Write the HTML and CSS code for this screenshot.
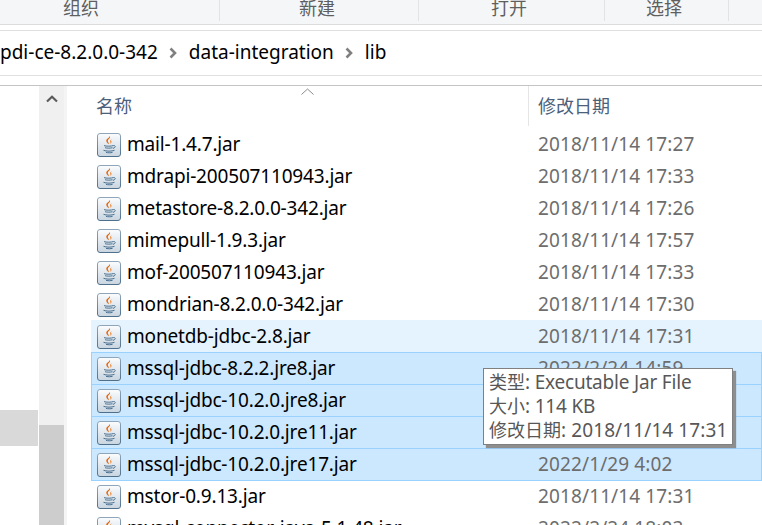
FILE: index.html
```html
<!DOCTYPE html>
<html lang="zh">
<head>
<meta charset="utf-8">
<title>lib</title>
<link rel="stylesheet" href="styles.css">
</head>
<body>
<svg class="defs" width="0" height="0" aria-hidden="true">
  <defs>
    <linearGradient id="jarbg" x1="0" y1="0" x2="0" y2="1">
      <stop offset="0" stop-color="#fbfcfd"/>
      <stop offset="1" stop-color="#c9d5e0"/>
    </linearGradient>
    <linearGradient id="jarline" x1="0" y1="0" x2="0" y2="1">
      <stop offset="0" stop-color="#8fa6ba"/>
      <stop offset="1" stop-color="#4f708c"/>
    </linearGradient>
    <symbol id="jar" viewBox="0 0 24 24">
      <rect x="0.5" y="0.5" width="23" height="23" rx="2.5" fill="url(#jarbg)" stroke="url(#jarline)"/>
      <path d="M12.800 3c1.500 2.200-3 3.400-1.800 5.800.4.900 1 1.500.9 2.400-1.900-1.200-3.400-2.800-2.300-4.700.8-1.200 2.900-1.800 3.200-3.500z" fill="#e2640f"/>
      <path d="M15 6.200c-1.700.8-2.300 1.700-1.700 3 .2.500.4 1 .1 1.700 1.500-1 1.300-2.100.8-2.800-.5-.7-.2-1.200.8-1.900z" fill="#ee8a35"/>
      <path d="M7 12.600c2 .8 7.500.8 9.500-.1M8 14.700c1.800.6 5.800.6 7.500 0M16.500 12.600c2.200-.4 2.600 1.900-.6 2.800M6.500 17.300c2.500 1.100 8.500 1.100 11 0M9 19.400c2 .5 4.500.5 6.500 0" fill="none" stroke="#4a7090" stroke-width="1"/>
    </symbol>
  </defs>
</svg>
<div class="window">
  <nav class="toolbar">
    <div class="tool tool-a"><span>组织</span></div>
    <div class="tool tool-b"><span>新建</span></div>
    <div class="tool tool-c"><span>打开</span></div>
    <div class="tool tool-d"><span>选择</span></div>
    <div class="tool tool-e"></div>
  </nav>
  <div class="address">
    <span class="crumb">pdi-ce-8.2.0.0-342</span>
    <svg class="sep" viewBox="0 0 8 12"><path d="M1.500 1.500 6 6l-4.500 4.500" fill="none" stroke="#808080" stroke-width="2.600"/></svg>
    <span class="crumb">data-integration</span>
    <svg class="sep" viewBox="0 0 8 12"><path d="M1.500 1.500 6 6l-4.500 4.500" fill="none" stroke="#808080" stroke-width="2.600"/></svg>
    <span class="crumb">lib</span>
  </div>
  <div class="content">
    <aside class="nav">
      <div class="nav-pane"><div class="nav-selected"></div></div>
      <div class="scrollbar">
        <svg class="scroll-up" viewBox="0 0 12 8"><path d="M1 6.500 6 1.800l5 4.700" fill="none" stroke="#5a5a5a" stroke-width="2.200"/></svg>
        <div class="scroll-thumb"></div>
      </div>
      <div class="gutter"></div>
    </aside>
    <main class="list">
      <header class="list-head">
        <div class="head-name">名称</div>
        <svg class="sort" viewBox="0 0 13 7"><path d="M.5 6.500 6.500 1l6 5.500" fill="none" stroke="#8a8a8a"/></svg>
        <div class="head-date">修改日期</div>
      </header>
      <div class="row"><svg class="icon"><use href="#jar"/></svg><span class="name">mail-1.4.7.jar</span><span class="date">2018/11/14 17:27</span></div>
      <div class="row"><svg class="icon"><use href="#jar"/></svg><span class="name">mdrapi-200507110943.jar</span><span class="date">2018/11/14 17:33</span></div>
      <div class="row"><svg class="icon"><use href="#jar"/></svg><span class="name">metastore-8.2.0.0-342.jar</span><span class="date">2018/11/14 17:26</span></div>
      <div class="row"><svg class="icon"><use href="#jar"/></svg><span class="name">mimepull-1.9.3.jar</span><span class="date">2018/11/14 17:57</span></div>
      <div class="row"><svg class="icon"><use href="#jar"/></svg><span class="name">mof-200507110943.jar</span><span class="date">2018/11/14 17:33</span></div>
      <div class="row"><svg class="icon"><use href="#jar"/></svg><span class="name">mondrian-8.2.0.0-342.jar</span><span class="date">2018/11/14 17:30</span></div>
      <div class="row hover"><svg class="icon"><use href="#jar"/></svg><span class="name">monetdb-jdbc-2.8.jar</span><span class="date">2018/11/14 17:31</span></div>
      <div class="row selected"><svg class="icon"><use href="#jar"/></svg><span class="name">mssql-jdbc-8.2.2.jre8.jar</span><span class="date">2022/2/24 14:59</span></div>
      <div class="row selected"><svg class="icon"><use href="#jar"/></svg><span class="name">mssql-jdbc-10.2.0.jre8.jar</span><span class="date">2022/1/29 4:02</span></div>
      <div class="row selected"><svg class="icon"><use href="#jar"/></svg><span class="name">mssql-jdbc-10.2.0.jre11.jar</span><span class="date">2022/1/29 4:02</span></div>
      <div class="row selected last"><svg class="icon"><use href="#jar"/></svg><span class="name">mssql-jdbc-10.2.0.jre17.jar</span><span class="date">2022/1/29 4:02</span></div>
      <div class="row"><svg class="icon"><use href="#jar"/></svg><span class="name">mstor-0.9.13.jar</span><span class="date">2018/11/14 17:31</span></div>
      <div class="row"><svg class="icon"><use href="#jar"/></svg><span class="name">mysql-connector-java-5.1.48.jar</span><span class="date">2022/2/24 18:03</span></div>
    </main>
  </div>
  <div class="tooltip">
    <div class="tip-line tip-type"><span class="cjk">类型</span>: Executable Jar File</div>
    <div class="tip-line tip-size"><span class="cjk">大小</span>: 114 KB</div>
    <div class="tip-line tip-date"><span class="cjk">修改日期</span>: 2018/11/14 17:31</div>
  </div>
</div>
</body>
</html>
```
FILE: styles.css
```css
html, body { margin: 0; padding: 0; background: #fff; }
body { font-family: "Noto Sans", "Noto Sans CJK SC", sans-serif; font-size: 19px; color: #000; }
.defs { position: absolute; }
.window { position: relative; width: 762px; height: 525px; overflow: hidden; }

.toolbar { display: flex; height: 24px; background: #f5f6f7; border-bottom: 1px solid #dcdcdc; color: #5f5f5f; font-size: 18px; }
.tool { height: 21px; box-sizing: border-box; border-right: 1px solid #e3e3e3; line-height: 18px; flex: none; }
.tool span { position: relative; top: -1px; }
.tool-a { width: 220px; padding-left: 63px; }
.tool-b { width: 199px; padding-left: 79px; }
.tool-c { width: 186px; padding-left: 72px; }
.tool-d { width: 124px; padding-left: 41px; }
.tool-e { flex: 1; border-right: 0; }

.address { display: flex; align-items: center; height: 44px; margin-top: 5px; border-top: 1px solid #e0e0e0; border-bottom: 1px solid #e0e0e0; overflow: hidden; line-height: 40px; }
.crumb { white-space: nowrap; position: relative; top: -1px; }
.sep { width: 8px; height: 12px; margin: 0 12px 0 11px; flex: none; }

.content { display: flex; margin-top: 9px; border-top: 1px solid #c4c4c4; height: 440px; }
.nav { display: flex; width: 91px; flex: none; }
.nav-pane { width: 39px; flex: none; padding-top: 324px; box-sizing: border-box; }
.nav-selected { width: 38px; height: 36px; background: #d9d9d9; }
.scrollbar { width: 25px; flex: none; background: #f0f0f0; display: flex; flex-direction: column; padding-top: 9px; box-sizing: border-box; }
.scroll-up { width: 12px; height: 8px; margin-left: 7px; }
.scroll-thumb { margin-top: 322px; flex: 1; background: #cdcdcd; }
.gutter { width: 3px; background: #f4f4f4; }

.list { flex: 1; min-width: 0; }
.list-head { position: relative; display: flex; height: 42px; color: #4c607a; font-size: 18px; line-height: 24px; }
.head-name { width: 438px; box-sizing: border-box; padding: 8px 0 0 5px; border-right: 1px solid #e5e5e5; height: 40px; }
.head-date { padding: 8px 0 0 9px; }
.sort { position: absolute; left: 210px; top: 2px; width: 13px; height: 7px; }

.row { display: flex; align-items: center; height: 32px; box-sizing: border-box; border: 1px solid transparent; border-bottom-width: 0; white-space: nowrap; }
.row.hover { background: #e5f3ff; }
.row.selected { background: #cce8ff; border-color: #99d1ff; }
.row.last { border-bottom-width: 1px; height: 33px; margin-bottom: -1px; }
.icon { width: 24px; height: 24px; flex: none; margin-left: 5px; }
.name { width: 411px; flex: none; margin-left: 6px; position: relative; top: -1px; letter-spacing: -0.17px; }
.date { color: #6d6d6d; position: relative; top: -1px; letter-spacing: 0.12px; }

.tooltip { position: absolute; left: 483px; top: 368px; width: 250px; height: 77px; box-sizing: border-box; padding: 1px 0 0 5px; background: #fff; border: 1px solid #808080; box-shadow: 3px 3px 1px #8e8e8e; color: #575757; line-height: 24px; white-space: nowrap; }
.tip-line { height: 24px; }
.tip-type { letter-spacing: -0.2px; }
.tip-size { letter-spacing: -0.2px; }
.tip-date { letter-spacing: 0.1px; }
.cjk { font-size: 18px; letter-spacing: 0; }
```
